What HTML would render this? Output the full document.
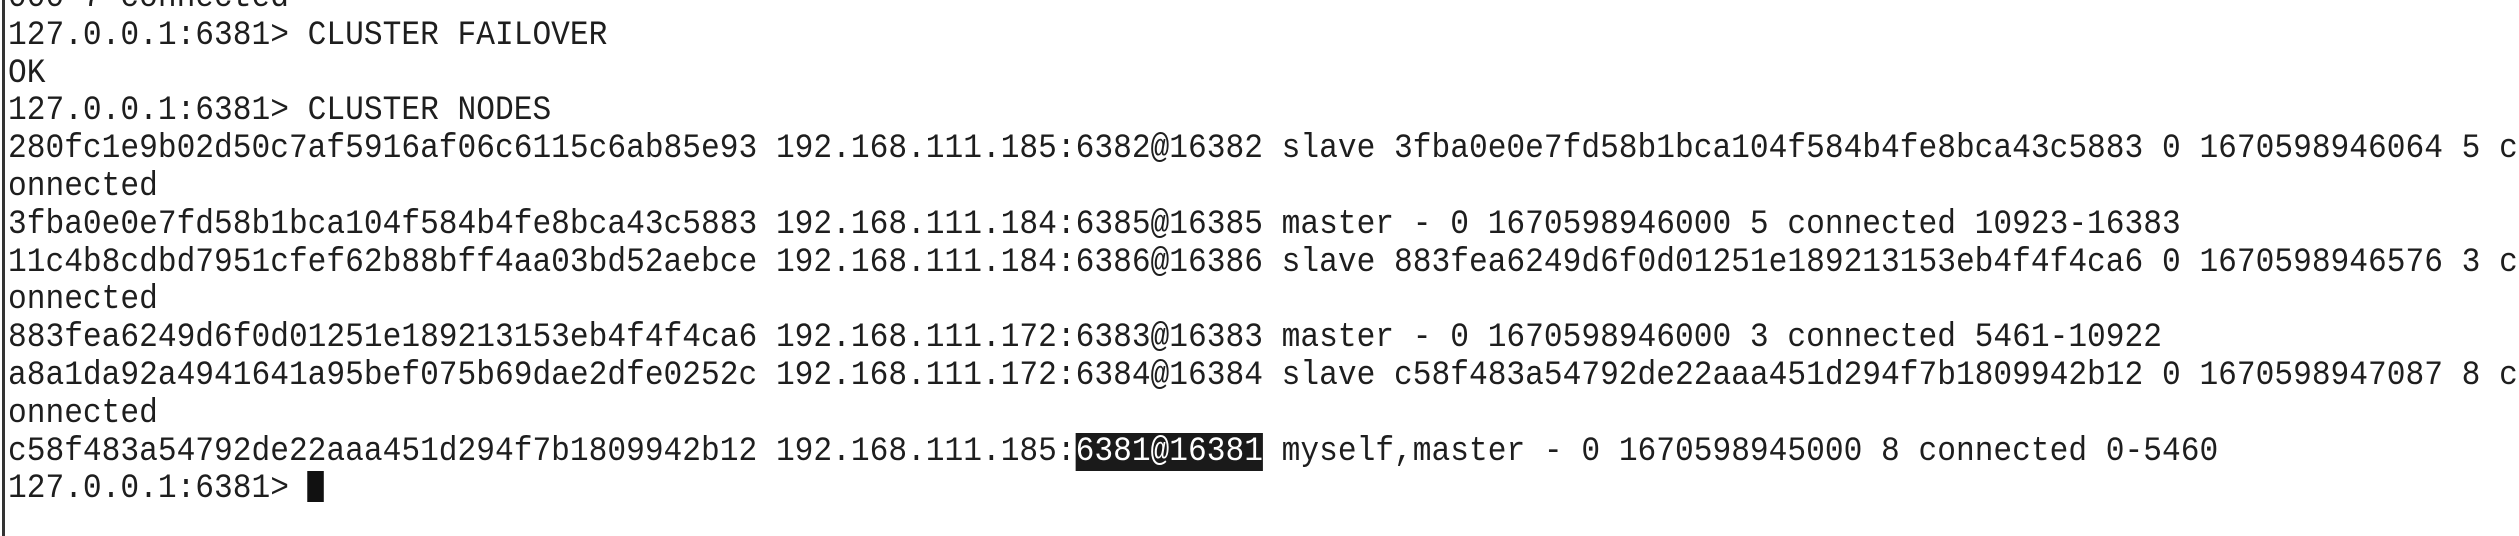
<!DOCTYPE html>
<html><head><meta charset="utf-8"><style>
html,body{margin:0;padding:0;background:#fff;}
body{width:2519px;height:536px;overflow:hidden;position:relative;}
.b{position:absolute;left:2px;top:0;width:3px;height:536px;background:#333;}
.t{position:absolute;left:8px;top:-20px;font-family:"Liberation Mono",monospace;font-size:34px;line-height:37.8px;color:#1e1e1e;white-space:pre;transform:scaleX(0.918);transform-origin:0 0;}
.h{background:#1a1a1a;color:#fff;}
.c{display:inline-block;width:18px;height:31px;background:#111;vertical-align:-5px;}
</style></head><body>
<div class="b"></div>
<div class="t">000 7 connected
127.0.0.1:6381> CLUSTER FAILOVER
OK
127.0.0.1:6381> CLUSTER NODES
280fc1e9b02d50c7af5916af06c6115c6ab85e93 192.168.111.185:6382@16382 slave 3fba0e0e7fd58b1bca104f584b4fe8bca43c5883 0 1670598946064 5 c
onnected
3fba0e0e7fd58b1bca104f584b4fe8bca43c5883 192.168.111.184:6385@16385 master - 0 1670598946000 5 connected 10923-16383
11c4b8cdbd7951cfef62b88bff4aa03bd52aebce 192.168.111.184:6386@16386 slave 883fea6249d6f0d01251e189213153eb4f4f4ca6 0 1670598946576 3 c
onnected
883fea6249d6f0d01251e189213153eb4f4f4ca6 192.168.111.172:6383@16383 master - 0 1670598946000 3 connected 5461-10922
a8a1da92a4941641a95bef075b69dae2dfe0252c 192.168.111.172:6384@16384 slave c58f483a54792de22aaa451d294f7b1809942b12 0 1670598947087 8 c
onnected
c58f483a54792de22aaa451d294f7b1809942b12 192.168.111.185:<span class="h">6381@16381</span> myself,master - 0 1670598945000 8 connected 0-5460
127.0.0.1:6381> <span class="c"></span></div>
</body></html>
